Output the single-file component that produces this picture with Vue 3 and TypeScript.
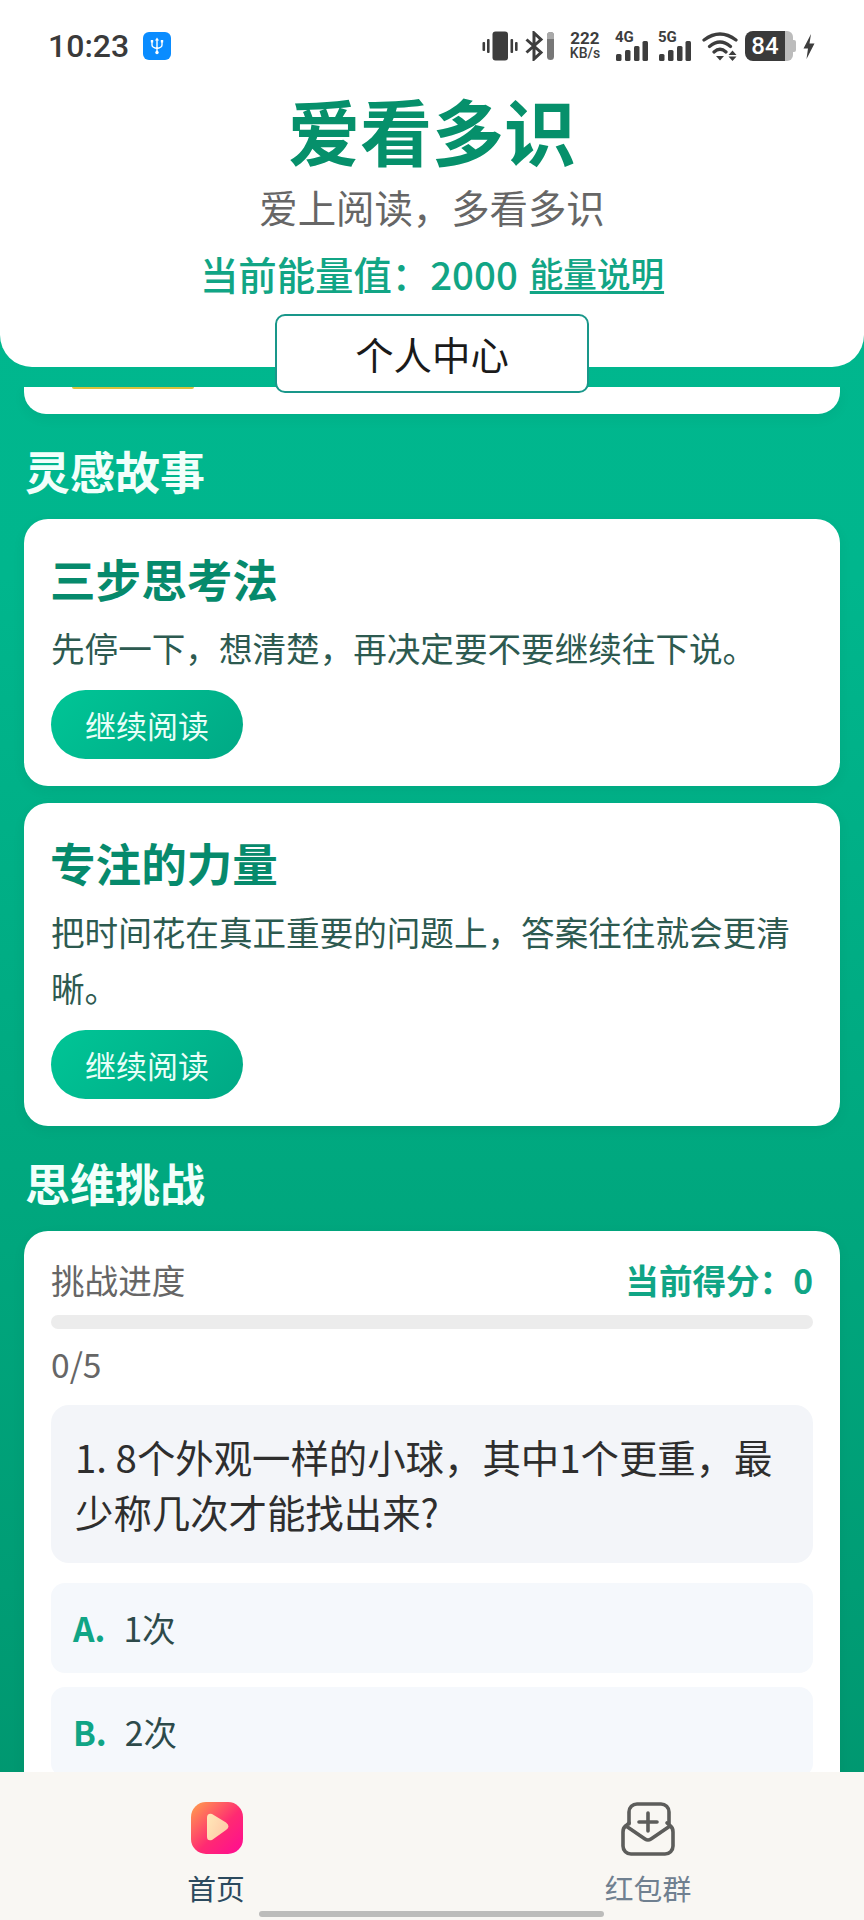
<script setup lang="ts">
interface Story {
  title: string;
  text: string;
}

const stories: Story[] = [
  { title: '三步思考法', text: '先停一下，想清楚，再决定要不要继续往下说。' },
  { title: '专注的力量', text: '把时间花在真正重要的问题上，答案往往就会更清晰。' },
];

const options = [
  { key: 'A.', text: '1次' },
  { key: 'B.', text: '2次' },
];

const signals = ['4G', '5G'];
</script>

<template>
  <div class="page">
    <header class="top">
      <div class="status">
        <span class="time">10:23</span>
        <span class="usb">
          <svg width="14" height="18" viewBox="0 0 14 18" fill="none" stroke="#fff" stroke-width="1.4">
            <path d="M7 2V16M2 5v3q0 2.500 5 3.500q5-1 5-3.500V5" />
            <circle cx="7" cy="15.500" r="1.700" fill="#fff" stroke="none" />
            <path d="M7 0.500l2 3H5zM0.800 3h2.400v2.400H0.800zM10.800 3h2.400v2.400h-2.400z" fill="#fff" stroke="none" />
          </svg>
        </span>
        <div class="status-icons">
          <svg width="36" height="30" viewBox="0 0 36 30" fill="#3d3d3d">
            <rect x="10.500" y="0.500" width="15.500" height="29" rx="3" />
            <rect x="0.500" y="11" width="2.600" height="9" rx="1" />
            <rect x="5" y="8" width="2.600" height="14" rx="1" />
            <rect x="28.500" y="8" width="2.600" height="14" rx="1" />
            <rect x="33" y="11" width="2.600" height="9" rx="1" />
          </svg>
          <svg class="bt" width="29" height="30" viewBox="0 0 29 30" fill="none">
            <path d="M1.500 8.500L16 21.500L9 28V2L16 8.500L1.500 21.500" stroke="#3d3d3d" stroke-width="3" />
            <rect x="22" y="1" width="7" height="28" rx="3.500" fill="#777" />
            <path d="M22 8V4.500a3.500 3.500 0 0 1 7 0V8z" fill="#a9a9a9" />
          </svg>
          <div class="speed">
            <span>222</span>
            <span class="unit">KB/s</span>
          </div>
          <div v-for="s in signals" :key="s" class="signal">
            <span>{{ s }}</span>
            <svg width="33" height="20" viewBox="0 0 33 20" fill="#3d3d3d">
              <rect x="1" y="13" width="5.500" height="7" rx="1.500" />
              <rect x="10" y="9" width="5.500" height="11" rx="1.500" />
              <rect x="19" y="5" width="5.500" height="15" rx="1.500" />
              <rect x="27.500" y="0" width="5.500" height="20" rx="1.500" />
            </svg>
          </div>
          <svg class="wifi" width="36" height="30" viewBox="0 0 36 30" fill="none">
            <path d="M2 9Q18-3 34 9M7.500 15.500Q18 6.500 28.500 15.500M12 21Q18 15.500 24 21" stroke="#3d3d3d" stroke-width="3.200" stroke-linecap="round" />
            <path d="M14 25h8l-4 4.500zM26.500 24l4-4.500 4 4.500zM26.500 25.500h8l-4 4.500z" fill="#3d3d3d" />
          </svg>
          <div class="battery">
            <span class="level">84</span>
            <span class="rest"></span>
            <span class="nub"></span>
          </div>
          <svg class="bolt" width="12" height="25" viewBox="0 0 12 25" fill="#3d3d3d">
            <path d="M8 0L0.500 14.500H5L3.500 25L11.500 9.500H6.500z" />
          </svg>
        </div>
      </div>
      <h1 class="brand">爱看多识</h1>
      <p class="slogan">爱上阅读，多看多识</p>
      <p class="energy">
        <span>当前能量值：2000</span>
        <a class="energy-link">能量说明</a>
      </p>
    </header>

    <button class="center-btn">个人中心</button>

    <main class="content">
      <div class="clipped-card"><i class="clipped-bar"></i></div>

      <h2 class="section">灵感故事</h2>
      <article v-for="item in stories" :key="item.title" class="card story">
        <h3>{{ item.title }}</h3>
        <p>{{ item.text }}</p>
        <button class="read">继续阅读</button>
      </article>

      <h2 class="section">思维挑战</h2>
      <section class="card quiz">
        <div class="quiz-head">
          <span>挑战进度</span>
          <b>当前得分：0</b>
        </div>
        <div class="track"></div>
        <div class="count">0/5</div>
        <div class="question">1. 8个外观一样的小球，其中1个更重，最少称几次才能找出来?</div>
        <div v-for="o in options" :key="o.key" class="option">
          <b>{{ o.key }}</b>
          <span>{{ o.text }}</span>
        </div>
      </section>
    </main>

    <nav class="tabs">
      <div class="tab on">
        <svg width="54" height="56" viewBox="0 0 54 56">
          <defs>
            <linearGradient id="playBg" x1="0" y1="0" x2="1" y2="1">
              <stop offset="0" stop-color="#ffa24c" />
              <stop offset="0.55" stop-color="#ff2a72" />
              <stop offset="1" stop-color="#ff0a94" />
            </linearGradient>
            <linearGradient id="playFg" x1="0" y1="0" x2="1" y2="0.6">
              <stop offset="0" stop-color="#ffe9b8" />
              <stop offset="1" stop-color="#ffc9a8" />
            </linearGradient>
          </defs>
          <rect x="2" y="0" width="52" height="52" rx="15" fill="url(#playBg)" />
          <path d="M18 16q0-5 5-4l14 8.500q5 4 0 7.500l-14 10q-5 1.500-5-3.500z" fill="url(#playFg)" />
        </svg>
        <span>首页</span>
      </div>
      <div class="tab">
        <svg width="54" height="56" viewBox="0 0 54 56" fill="none" stroke="#5d5d5b" stroke-width="3.600" stroke-linecap="round" stroke-linejoin="round">
          <path d="M8 22V10a8 8 0 0 1 8-8h24a8 8 0 0 1 8 8v12" />
          <path d="M8 21L4.500 24Q2 26 2 30V44a8 8 0 0 0 8 8H44a8 8 0 0 0 8-8V30Q52 26 49.500 24L46 21" />
          <path d="M5 24L24 37Q27 39 30 37L49 24" />
          <path d="M18 20H36M27 11V29" />
        </svg>
        <span>红包群</span>
      </div>
      <i class="home-bar"></i>
    </nav>
  </div>
</template>

<style scoped>
.page {
  position: relative;
  display: flex;
  flex-direction: column;
  width: 864px;
  height: 1920px;
  overflow: hidden;
  background: linear-gradient(180deg, #00b88f 0%, #00b68d 30%, #00a67d 65%, #00946d 100%);
  font-family: "Noto Sans CJK SC", sans-serif;
}
.top {
  flex: none;
  height: 367px;
  box-sizing: border-box;
  background: #fff;
  border-radius: 0 0 32px 32px;
  text-align: center;
}
.status {
  display: flex;
  align-items: center;
  height: 92px;
  padding: 0 49px 0 48px;
  box-sizing: border-box;
  font-family: Roboto, sans-serif;
}
.time {
  font-size: 32px;
  font-weight: 500;
  color: #3a3a3a;
}
.usb {
  display: flex;
  align-items: center;
  justify-content: center;
  width: 28px;
  height: 28px;
  margin-left: 14px;
  background: #0a8cff;
  border-radius: 6px;
}
.status-icons {
  display: flex;
  align-items: center;
  margin-left: auto;
  color: #3d3d3d;
}
.bt {
  margin-left: 7px;
}
.speed {
  display: flex;
  flex-direction: column;
  align-items: center;
  width: 34px;
  margin: 0 13px 0 14px;
  font-size: 17px;
  font-weight: 700;
  line-height: 15px;
}
.speed .unit {
  font-size: 14px;
  font-weight: 500;
}
.signal {
  display: flex;
  flex-direction: column;
  align-items: flex-start;
  width: 35px;
  height: 30px;
  font-size: 15px;
  font-weight: 700;
  line-height: 12px;
}
.signal + .signal {
  margin-left: 8px;
}
.signal svg {
  margin-top: -2px;
}
.wifi {
  margin-left: 9px;
}
.battery {
  display: flex;
  align-items: center;
  width: 51px;
  height: 30px;
  margin-left: 7px;
}
.level {
  width: 40px;
  height: 30px;
  background: #3a3a3a;
  border-radius: 8px 0 0 8px;
  color: #fff;
  font-size: 24px;
  font-weight: 500;
  line-height: 30px;
  text-align: center;
}
.rest {
  width: 8px;
  height: 30px;
  background: #bcbcbc;
  border-radius: 0 6px 6px 0;
}
.nub {
  width: 3px;
  height: 12px;
  background: #bcbcbc;
  border-radius: 0 2px 2px 0;
}
.bolt {
  margin-left: 7px;
}
.brand {
  margin: -5px 0 0;
  font-size: 72px;
  line-height: 84px;
  font-weight: 700;
  color: #06906b;
}
.slogan {
  margin: 10px 0 0;
  font-size: 38.4px;
  line-height: 50px;
  color: #666;
}
.energy {
  display: flex;
  justify-content: center;
  align-items: center;
  gap: 12px;
  margin: 17px 0 0;
  font-size: 38.4px;
  line-height: 50px;
  font-weight: 500;
  color: #11a585;
}
.energy-link {
  font-size: 33.6px;
  text-decoration: underline;
  text-underline-offset: 4px;
}
.center-btn {
  position: absolute;
  top: 314px;
  left: 275px;
  width: 314px;
  height: 79px;
  background: #fff;
  border: 2px solid #19978a;
  border-radius: 10px;
  font: 400 38.4px/1 "Noto Sans CJK SC", sans-serif;
  color: #1a1a1a;
}
.content {
  flex: 1;
  min-height: 0;
  margin-top: 20px;
  padding: 0 24px;
  overflow: hidden;
}
.clipped-card {
  height: 27px;
  background: #fff;
  border-radius: 0 0 22px 22px;
  padding-left: 48px;
  box-shadow: 0 4px 14px rgba(0, 0, 0, 0.05);
}
.clipped-bar {
  display: block;
  width: 122px;
  height: 2px;
  background: #d8c23c;
  border-radius: 0 0 6px 6px;
}
.section {
  margin: 27px 0 18px;
  padding-left: 1px;
  font-size: 45px;
  line-height: 60px;
  font-weight: 700;
  color: #f2fffb;
}
.card {
  background: #fff;
  border-radius: 24px;
  padding: 27px;
  box-shadow: 0 4px 14px rgba(0, 0, 0, 0.05);
}
.story + .story {
  margin-top: 17px;
}
.story h3 {
  margin: -4px 0 10px -1px;
  font-size: 45.6px;
  line-height: 72px;
  font-weight: 700;
  color: #068a6c;
}
.story p {
  margin: -4px 0 14px;
  font-size: 33.6px;
  line-height: 56px;
  color: #2d5a50;
}
.read {
  display: block;
  width: 192px;
  height: 69px;
  border: 0;
  border-radius: 35px;
  background: linear-gradient(135deg, #00c596, #00a985);
  color: #e9fff8;
  font: 400 31px/1 "Noto Sans CJK SC", sans-serif;
}
.quiz-head {
  display: flex;
  justify-content: space-between;
  margin-top: -3px;
  font-size: 33.6px;
  line-height: 50px;
  color: #666;
}
.quiz-head b {
  font-weight: 700;
  color: #10a585;
}
.track {
  height: 14px;
  margin-top: 10px;
  background: #ececec;
  border-radius: 7px;
}
.count {
  margin-top: 10px;
  font-size: 33.6px;
  line-height: 50px;
  color: #666;
}
.question {
  margin-top: 16px;
  padding: 24px;
  background: #f3f5f9;
  border-radius: 18px;
  font-size: 38.4px;
  line-height: 55px;
  color: #2e2e2e;
}
.option {
  display: flex;
  align-items: center;
  gap: 18px;
  height: 90px;
  box-sizing: border-box;
  margin-top: 14px;
  padding: 0 22px 2px;
  background: #f5f8fc;
  border-radius: 14px;
  font-size: 33.6px;
  color: #2d4a4a;
}
.question + .option {
  margin-top: 20px;
}
.option b {
  color: #10a585;
  font-weight: 700;
}
.tabs {
  position: relative;
  flex: none;
  display: grid;
  grid-template-columns: 1fr 1fr;
  height: 148px;
  background: #f9f7f3;
}
.tab {
  display: flex;
  flex-direction: column;
  align-items: center;
  padding-top: 30px;
  font-size: 28.8px;
  line-height: 40px;
  color: #708090;
}
.tab span {
  margin-top: 10px;
}
.tab.on {
  color: #2c4a5e;
}
.home-bar {
  position: absolute;
  left: 259px;
  bottom: 3px;
  width: 345px;
  height: 6px;
  background: #bcbcba;
  border-radius: 3px;
}
</style>

<style>
body {
  margin: 0;
}
</style>
